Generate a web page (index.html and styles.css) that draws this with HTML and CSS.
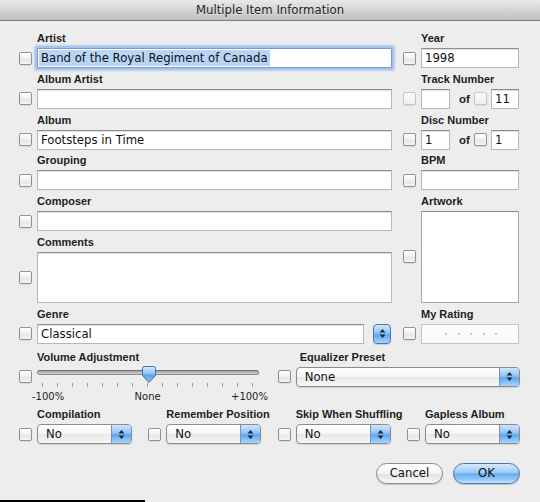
FILE: index.html
```html
<!DOCTYPE html>
<html>
<head>
<meta charset="utf-8">
<title>Multiple Item Information</title>
<link rel="stylesheet" href="styles.css">
</head>
<body>
<div class="window">
  <div class="titlebar">Multiple Item Information</div>

  <div class="top">
    <div class="col col-left">
      <div class="field">
        <div class="label">Artist</div>
        <span class="cb"></span>
        <div class="tf focus"><span class="sel">Band of the Royal Regiment of Canada</span></div>
      </div>
      <div class="field">
        <div class="label">Album Artist</div>
        <span class="cb"></span>
        <div class="tf"></div>
      </div>
      <div class="field">
        <div class="label">Album</div>
        <span class="cb"></span>
        <div class="tf">Footsteps in Time</div>
      </div>
      <div class="field">
        <div class="label">Grouping</div>
        <span class="cb"></span>
        <div class="tf"></div>
      </div>
      <div class="field">
        <div class="label">Composer</div>
        <span class="cb"></span>
        <div class="tf"></div>
      </div>
      <div class="field">
        <div class="label">Comments</div>
        <span class="cb"></span>
        <div class="tf area"></div>
      </div>
      <div class="field">
        <div class="label">Genre</div>
        <span class="cb"></span>
        <div class="genre">
          <div class="tf genre-input">Classical</div>
          <span class="stepper">
            <svg width="7" height="11" viewBox="0 0 7 11"><path d="M0.5 4.5 L3.5 1 L6.5 4.5 Z M0.5 6.5 L3.5 10 L6.5 6.5 Z" fill="#1c2a3a"/></svg>
          </span>
        </div>
      </div>
    </div>

    <div class="col col-right">
      <div class="field">
        <div class="label">Year</div>
        <span class="cb"></span>
        <div class="tf">1998</div>
      </div>
      <div class="field">
        <div class="label">Track Number</div>
        <span class="cb off"></span>
        <div class="pair">
          <div class="tf"></div>
          <span class="of">of</span>
          <span class="cb off"></span>
          <div class="tf">11</div>
        </div>
      </div>
      <div class="field">
        <div class="label">Disc Number</div>
        <span class="cb"></span>
        <div class="pair">
          <div class="tf">1</div>
          <span class="of">of</span>
          <span class="cb"></span>
          <div class="tf">1</div>
        </div>
      </div>
      <div class="field">
        <div class="label">BPM</div>
        <span class="cb"></span>
        <div class="tf"></div>
      </div>
      <div class="field">
        <div class="label">Artwork</div>
        <span class="cb"></span>
        <div class="artwork"></div>
      </div>
      <div class="field">
        <div class="label">My Rating</div>
        <span class="cb"></span>
        <div class="rating"><i></i><i></i><i></i><i></i><i></i></div>
      </div>
    </div>
  </div>

  <div class="mid">
    <div class="vol">
      <div class="label">Volume Adjustment</div>
      <span class="cb"></span>
      <div class="slider">
        <div class="track"></div>
        <svg class="thumb" width="16" height="19" viewBox="0 0 16 19">
          <defs>
            <linearGradient id="tg" x1="0" y1="0" x2="0" y2="1">
              <stop offset="0" stop-color="#d9ecfd"/>
              <stop offset="0.45" stop-color="#8cc2f5"/>
              <stop offset="0.55" stop-color="#5aa3ec"/>
              <stop offset="1" stop-color="#8cc6f8"/>
            </linearGradient>
          </defs>
          <path d="M3.5 1.5 H12.5 Q14.5 1.5 14.5 3.5 V10.5 L8 17.5 L1.5 10.5 V3.5 Q1.5 1.5 3.5 1.5 Z" fill="url(#tg)" stroke="#3f6ea6" stroke-width="1"/>
        </svg>
        <div class="ticks"><i></i><i></i><i></i><i></i><i></i><i></i><i></i><i></i><i></i><i></i><i></i><i></i><i></i><i></i><i></i></div>
        <div class="scale"><span>-100%</span><span>None</span><span>+100%</span></div>
      </div>
    </div>
    <div class="eq">
      <div class="label">Equalizer Preset</div>
      <span class="cb"></span>
      <div class="popup">
        <span class="ptext">None</span>
        <span class="parrow"><svg width="7" height="11" viewBox="0 0 7 11"><path d="M0.5 4.5 L3.5 1 L6.5 4.5 Z M0.5 6.5 L3.5 10 L6.5 6.5 Z" fill="#1c2a3a"/></svg></span>
      </div>
    </div>
  </div>

  <div class="bottom">
    <div class="pf">
      <div class="label">Compilation</div>
      <span class="cb"></span>
      <div class="popup">
        <span class="ptext">No</span>
        <span class="parrow"><svg width="7" height="11" viewBox="0 0 7 11"><path d="M0.5 4.5 L3.5 1 L6.5 4.5 Z M0.5 6.5 L3.5 10 L6.5 6.5 Z" fill="#1c2a3a"/></svg></span>
      </div>
    </div>
    <div class="pf">
      <div class="label">Remember Position</div>
      <span class="cb"></span>
      <div class="popup">
        <span class="ptext">No</span>
        <span class="parrow"><svg width="7" height="11" viewBox="0 0 7 11"><path d="M0.5 4.5 L3.5 1 L6.5 4.5 Z M0.5 6.5 L3.5 10 L6.5 6.5 Z" fill="#1c2a3a"/></svg></span>
      </div>
    </div>
    <div class="pf">
      <div class="label">Skip When Shuffling</div>
      <span class="cb"></span>
      <div class="popup">
        <span class="ptext">No</span>
        <span class="parrow"><svg width="7" height="11" viewBox="0 0 7 11"><path d="M0.5 4.5 L3.5 1 L6.5 4.5 Z M0.5 6.5 L3.5 10 L6.5 6.5 Z" fill="#1c2a3a"/></svg></span>
      </div>
    </div>
    <div class="pf">
      <div class="label">Gapless Album</div>
      <span class="cb"></span>
      <div class="popup">
        <span class="ptext">No</span>
        <span class="parrow"><svg width="7" height="11" viewBox="0 0 7 11"><path d="M0.5 4.5 L3.5 1 L6.5 4.5 Z M0.5 6.5 L3.5 10 L6.5 6.5 Z" fill="#1c2a3a"/></svg></span>
      </div>
    </div>
  </div>

  <div class="buttons">
    <div class="btn cancel">Cancel</div>
    <div class="btn ok">OK</div>
  </div>

  <div class="edge"></div>
</div>
</body>
</html>
```

FILE: styles.css
```css
html, body {
  margin: 0;
  padding: 0;
}
body {
  width: 540px;
  height: 502px;
  overflow: hidden;
  background: #ededed;
  font-family: "DejaVu Sans", sans-serif;
  color: #1a1a1a;
}
.window {
  height: 502px;
  display: flex;
  flex-direction: column;
  background: #ededed;
}
.titlebar {
  height: 20px;
  border-bottom: 1px solid #7e7e7e;
  background: linear-gradient(#e9e9e9, #c0c0c0);
  text-align: center;
  font-size: 11.7px;
  line-height: 20px;
  color: #222;
  text-shadow: 0 1px 0 rgba(255, 255, 255, 0.45);
}
.label {
  font-family: "Liberation Sans", Arial, sans-serif;
  font-weight: bold;
  font-size: 11px;
  line-height: 15px;
  color: #1e1e1e;
  white-space: nowrap;
}

/* top two-column form */
.top {
  display: flex;
  padding: 10px 0 0 18px;
}
.col-right {
  margin-left: 11px;
}
.field {
  display: grid;
  grid-template-rows: 15px auto;
  row-gap: 2px;
  column-gap: 5px;
  margin-bottom: 3.75px;
}
.col-left .field {
  grid-template-columns: 14px 355px;
}
.col-right .field {
  grid-template-columns: 14px 98px;
  column-gap: 4px;
}
.field > .label {
  grid-column: 2;
  grid-row: 1;
}
.field > .cb {
  grid-column: 1;
  grid-row: 2;
  align-self: center;
}
.col-left .field > .cb {
  margin-left: 1px;
}
.field > .tf,
.field > .genre,
.field > .pair,
.field > .artwork,
.field > .rating {
  grid-column: 2;
  grid-row: 2;
}

/* checkbox */
.cb {
  display: block;
  width: 13px;
  height: 13px;
  box-sizing: border-box;
  border: 1px solid #919191;
  border-radius: 2px;
  background: linear-gradient(#ffffff, #f0f0f0 50%, #e4e4e4 51%, #f5f5f5);
  box-shadow: 0 1px 1px rgba(0, 0, 0, 0.08);
}
.cb.off {
  border-color: #c6c6c6;
  background: linear-gradient(#fafafa, #efefef);
}

/* text fields */
.tf {
  height: 20px;
  box-sizing: border-box;
  background: #fff;
  border: 1px solid #b7b7b7;
  border-top-color: #8c8c8c;
  box-shadow: inset 0 1px 0 #e2e2e2;
  padding-left: 3px;
  font-size: 11.7px;
  line-height: 18px;
  color: #111;
  white-space: nowrap;
  overflow: hidden;
}
.tf.focus {
  border-color: #7b9bc7;
  padding-left: 1px;
  box-shadow: 0 0 0 2px #a4c5ec, 0 0 2px 3px rgba(130, 170, 225, 0.45);
  border-radius: 1px;
}
.sel {
  display: inline-block;
  background: #b9d5f6;
  padding: 0 2px 0 2px;
  line-height: 16px;
  margin-top: 1px;
}
.tf.area {
  height: 51px;
}
.genre {
  display: flex;
  align-items: center;
}
.genre-input {
  width: 327px;
}
.stepper {
  margin-left: 9px;
  width: 18px;
  height: 20px;
  box-sizing: border-box;
  border: 1px solid #4a77b0;
  border-radius: 4px;
  background: linear-gradient(#cfe6fd, #8ec4f6 45%, #5ea6ee 55%, #a6d5fd);
  display: flex;
  align-items: center;
  justify-content: center;
  box-shadow: 0 1px 1px rgba(0, 0, 0, 0.15);
}
.pair {
  display: grid;
  grid-template-columns: 29px 24px 17px 28px;
  align-items: center;
}
.pair .of {
  font-family: "Liberation Sans", Arial, sans-serif;
  font-weight: bold;
  font-size: 11.5px;
  padding-left: 9px;
  color: #1e1e1e;
}
.pair .tf {
  padding-left: 3px;
}
.artwork {
  height: 91.75px;
  box-sizing: border-box;
  background: #fff;
  border: 1px solid #a9a9a9;
  border-top-color: #8c8c8c;
}
.rating {
  height: 20px;
  box-sizing: border-box;
  border: 1px solid #c4c4c4;
  background: #fbfbfb;
  display: flex;
  align-items: center;
  padding-left: 23px;
  gap: 10.5px;
}
.rating i {
  display: block;
  width: 2px;
  height: 2px;
  border-radius: 1px;
  background: #b4b4b4;
}

/* volume + equalizer */
.mid {
  display: grid;
  grid-template-columns: repeat(4, 114px);
  column-gap: 15.33px;
  padding-left: 18px;
  margin-top: 2.25px;
}
.vol {
  grid-column: 1 / span 2;
  display: grid;
  grid-template-columns: 14px 222px;
  grid-template-rows: 15px auto;
  column-gap: 5px;
}
.vol > .label {
  grid-column: 2;
  grid-row: 1;
}
.vol > .cb {
  grid-column: 1;
  grid-row: 2;
  align-self: start;
  margin: 5.5px 0 0 1px;
}
.slider {
  grid-column: 2;
  grid-row: 2;
  position: relative;
  padding-top: 5px;
}
.track {
  height: 5px;
  box-sizing: border-box;
  border-radius: 3px;
  border: 1px solid #8d8d8d;
  border-top-color: #707070;
  background: linear-gradient(#a3a3a3, #cfcfcf);
  margin-bottom: 8px;
}
.thumb {
  position: absolute;
  left: 104px;
  top: 0;
}
.ticks {
  display: flex;
  justify-content: space-between;
  padding: 0 6px 0 5px;
  height: 4px;
}
.ticks i {
  display: block;
  width: 1px;
  height: 4px;
  background: #a0a0a0;
}
.scale {
  display: flex;
  justify-content: space-between;
  margin: 4.5px -9px 0 -5px;
  font-size: 10px;
  line-height: 12px;
  color: #1e1e1e;
}
.eq {
  grid-column: 3 / span 2;
  display: grid;
  grid-template-columns: 14px 1fr;
  grid-template-rows: 15px 20px;
  row-gap: 2px;
  column-gap: 5px;
}
.eq > .label {
  grid-column: 2;
  grid-row: 1;
  padding-left: 4px;
}
.eq > .cb,
.pf > .cb {
  grid-column: 1;
  grid-row: 2;
  align-self: center;
  margin-left: 1px;
}
.eq > .popup,
.pf > .popup {
  grid-column: 2;
  grid-row: 2;
}

/* popup buttons */
.bottom {
  display: grid;
  grid-template-columns: repeat(4, 114px);
  column-gap: 15.33px;
  padding-left: 18px;
  margin-top: 4px;
}
.pf {
  display: grid;
  grid-template-columns: 14px 95px;
  grid-template-rows: 15px 20px;
  row-gap: 2px;
  column-gap: 5px;
}
.pf > .label {
  grid-column: 2;
  grid-row: 1;
}
.popup {
  display: flex;
  height: 20px;
  box-sizing: border-box;
  border: 1px solid #8b8b8b;
  border-radius: 4px;
  overflow: hidden;
  background: linear-gradient(#ffffff, #f5f5f5 50%, #e8e8e8 51%, #f7f7f7);
  box-shadow: 0 1px 1px rgba(0, 0, 0, 0.12);
}
.ptext {
  flex: 1;
  padding-left: 8px;
  font-size: 11.7px;
  line-height: 18px;
  color: #111;
}
.parrow {
  width: 19px;
  border-left: 1px solid #7494bd;
  background: linear-gradient(#cfe6fd, #8ec4f6 45%, #5ea6ee 55%, #a6d5fd);
  display: flex;
  align-items: center;
  justify-content: center;
}

/* dialog buttons */
.buttons {
  display: flex;
  justify-content: flex-end;
  gap: 10px;
  padding-right: 20px;
  margin-top: 19px;
}
.btn {
  width: 67px;
  height: 21px;
  box-sizing: border-box;
  border-radius: 11px;
  text-align: center;
  font-size: 11.7px;
  line-height: 19px;
  color: #111;
  box-shadow: 0 1px 1px rgba(0, 0, 0, 0.18);
}
.cancel {
  border: 1px solid #8a8a8a;
  background: linear-gradient(#ffffff, #f3f3f3 50%, #e2e2e2 51%, #f8f8f8);
}
.ok {
  border: 1px solid #4d74a9;
  background: linear-gradient(#d6ebfe, #9bcbf7 45%, #68adf1 52%, #8fc6f8 80%, #c6e6ff);
}
.edge {
  margin-top: auto;
  width: 145px;
  height: 2px;
  background: #000;
}
```
